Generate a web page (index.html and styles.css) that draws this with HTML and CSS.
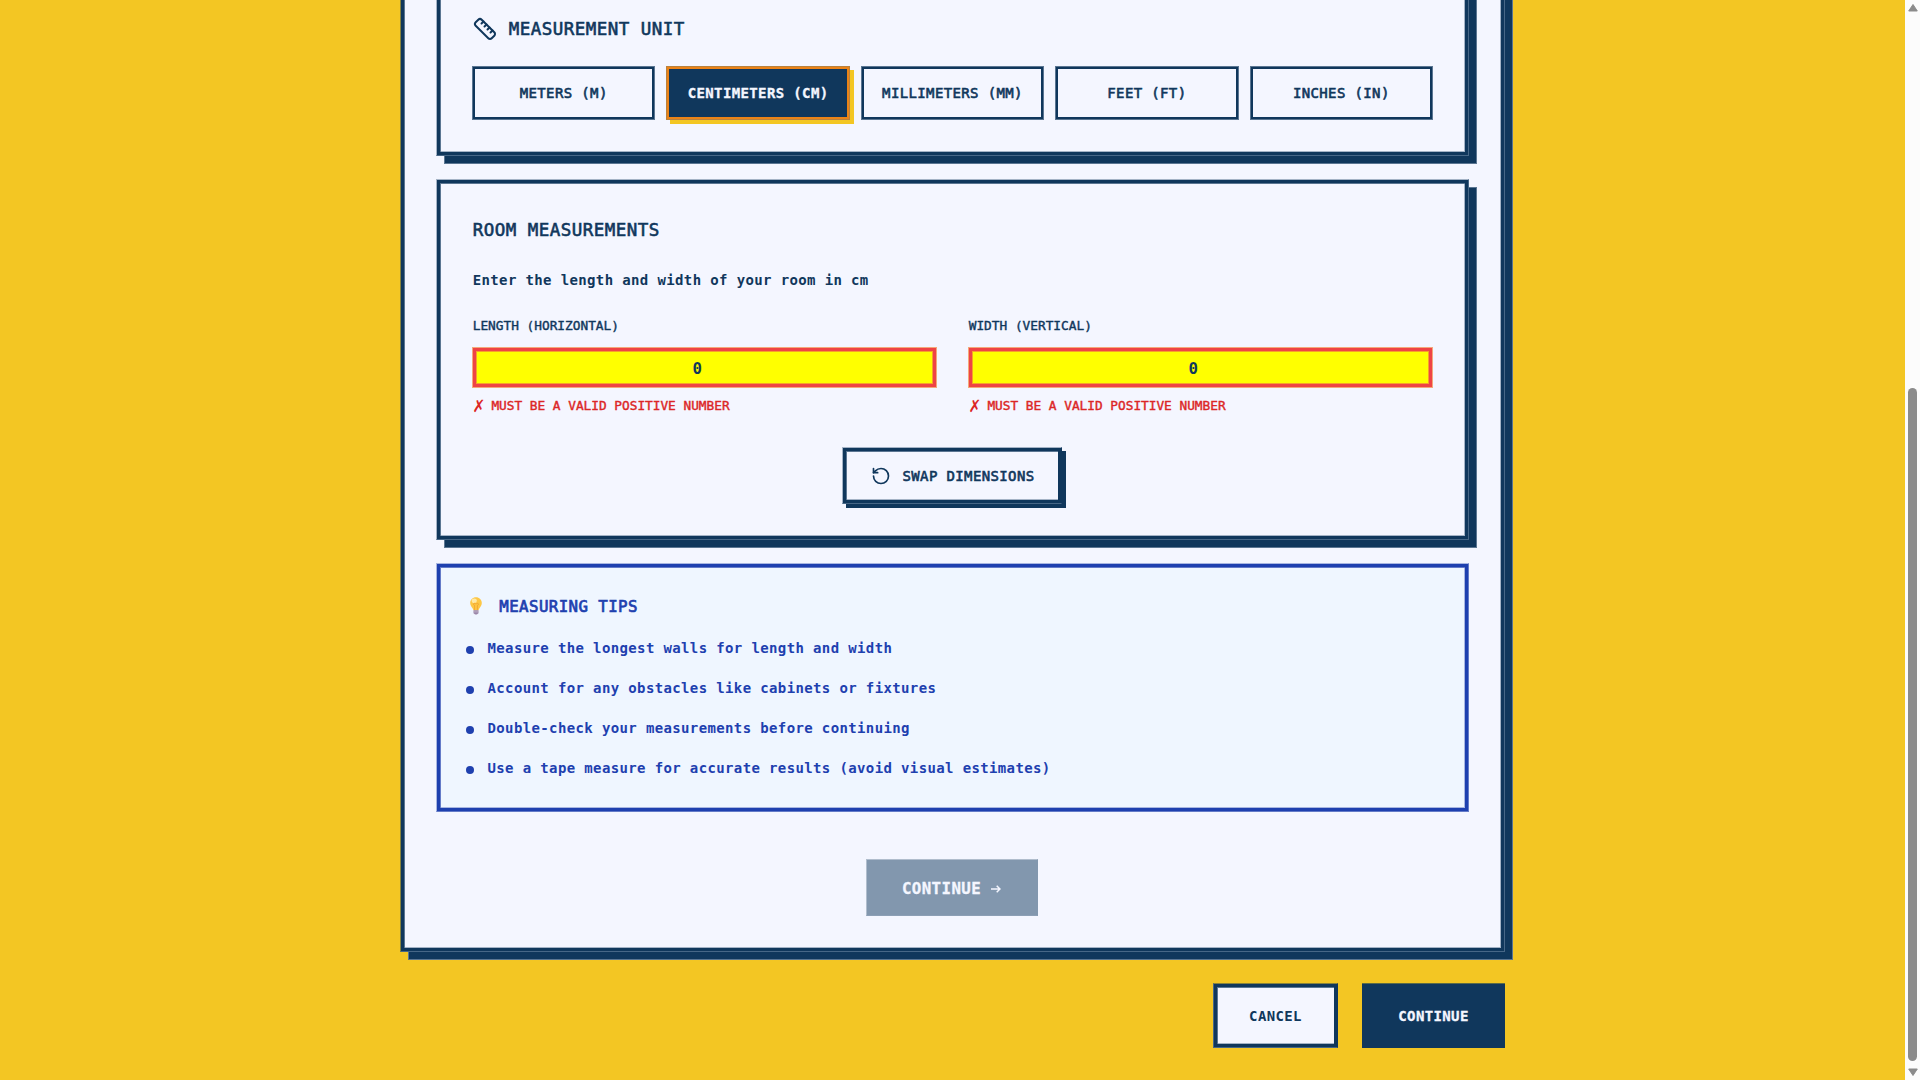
FILE: index.html
```html
<!DOCTYPE html>
<html lang="en">
<head>
<meta charset="utf-8">
<title>Room measurements</title>
<link rel="stylesheet" href="styles.css">
</head>
<body>
<div class="page">
  <main class="panel">
    <section class="card card-unit">
      <h2 class="heading heading-unit">
        <svg class="icon-ruler" viewBox="0 0 24 24" fill="none" stroke="currentColor" stroke-width="2" stroke-linecap="round" stroke-linejoin="round"><path d="M21.3 15.3a2.4 2.4 0 0 1 0 3.4l-2.6 2.6a2.4 2.4 0 0 1-3.4 0L2.7 8.7a2.41 2.41 0 0 1 0-3.4l2.6-2.6a2.41 2.41 0 0 1 3.4 0Z"/><path d="m14.5 12.5 2-2M11.5 9.5l2-2M8.5 6.5l2-2M17.5 15.5l2-2"/></svg>
        <span>MEASUREMENT UNIT</span>
      </h2>
      <div class="units">
        <button class="unit">METERS (M)</button>
        <button class="unit unit-active">CENTIMETERS (CM)</button>
        <button class="unit">MILLIMETERS (MM)</button>
        <button class="unit">FEET (FT)</button>
        <button class="unit">INCHES (IN)</button>
      </div>
    </section>

    <section class="card card-room">
      <h2 class="heading">ROOM MEASUREMENTS</h2>
      <p class="intro">Enter the length and width of your room in cm</p>
      <div class="fields">
        <div class="field">
          <div class="label">LENGTH (HORIZONTAL)</div>
          <div class="input">0</div>
          <div class="error"><span class="cross">✗</span>MUST BE A VALID POSITIVE NUMBER</div>
        </div>
        <div class="field">
          <div class="label">WIDTH (VERTICAL)</div>
          <div class="input">0</div>
          <div class="error"><span class="cross">✗</span>MUST BE A VALID POSITIVE NUMBER</div>
        </div>
      </div>
      <button class="swap">
        <svg class="icon-swap" viewBox="0 0 24 24" fill="none" stroke="currentColor" stroke-width="2" stroke-linecap="round" stroke-linejoin="round"><path d="M3 12a9 9 0 1 0 9-9 9.75 9.75 0 0 0-6.74 2.74L3 8"/><path d="M3 3v5h5"/></svg>
        <span>SWAP DIMENSIONS</span>
      </button>
    </section>

    <section class="card tips">
      <h3 class="tips-heading">
        <svg class="icon-bulb" viewBox="0 0 12 18"><path d="M6 .3C2.700 .3.200 2.800.200 6c0 2.200 1.200 3.600 2.200 4.900.6.8.9 1.500 1 2.400h5.200c.1-.9.400-1.600 1-2.400 1-1.300 2.200-2.700 2.200-4.900C11.800 2.800 9.300.3 6 .3z" fill="#fdc746"/><ellipse cx="4.300" cy="3.800" rx="2.600" ry="2.300" fill="#ffe9a6"/><path d="M4.600 13V8.300c-1.600-.4-1.400-2 0-2 1 0 1 .9 1.400.9s.4-.9 1.400-.9c1.400 0 1.600 1.600 0 2V13" fill="none" stroke="#f0a02c" stroke-width=".8"/><path d="M3.500 13.300h5v3l-1 .8h-3l-1-.8z" fill="#9a86a8"/><path d="M3.500 14.900h5" stroke="#cfc3d6" stroke-width=".7"/><path d="M4.800 17.100h2.400v.7H4.800z" fill="#b9a9c4"/></svg>
        <span>MEASURING TIPS</span>
      </h3>
      <ul class="tip-list">
        <li class="tip">Measure the longest walls for length and width</li>
        <li class="tip">Account for any obstacles like cabinets or fixtures</li>
        <li class="tip">Double-check your measurements before continuing</li>
        <li class="tip">Use a tape measure for accurate results (avoid visual estimates)</li>
      </ul>
    </section>

    <button class="next">CONTINUE <svg class="icon-arrow" viewBox="0 0 10 8" fill="none" stroke="currentColor" stroke-width="1.500"><path d="M0 4h8.800M5.700.8 9 4 5.700 7.200" /></svg></button>
  </main>

  <footer class="actions">
    <button class="action action-cancel">CANCEL</button>
    <button class="action action-continue">CONTINUE</button>
  </footer>
</div>
<div class="scrollbar">
  <svg class="scroll-arrow" viewBox="0 0 10 8"><path d="M5 .5 9.300 7H.7z" fill="#8b8b8b" stroke="#8b8b8b" stroke-linejoin="round"/></svg>
  <div class="scroll-thumb"></div>
  <svg class="scroll-arrow scroll-arrow-down" viewBox="0 0 10 8"><path d="M5 7.500.7 1h8.600z" fill="#8b8b8b" stroke="#8b8b8b" stroke-linejoin="round"/></svg>
</div>
</body>
</html>
```
FILE: styles.css
```css
:root {
  --navy: #10375c;
  --paper: #f4f6ff;
  --yellow: #f3c623;
  --orange: #eb8317;
  --line: var(--navy);
  --mid: #5b7692;
  --light: #a4b3c6;
}

* { box-sizing: border-box; margin: 0; padding: 0; }

body {
  display: flex;
  width: 1920px;
  height: 1080px;
  overflow: hidden;
  background: var(--yellow);
  color: var(--navy);
  font-family: "DejaVu Sans Mono", Consolas, monospace;
  font-size: 14px;
  font-weight: 700;
  letter-spacing: 0.37px;
}

button {
  font: inherit;
  letter-spacing: inherit;
  color: inherit;
  background: var(--paper);
  border: 0;
  white-space: nowrap;
}

.page {
  width: 1905px;
  padding-left: 400px;
}

/* Frames: a crisp 3px line with soft 1px edges and a hard drop shadow */
.panel, .card {
  background: var(--paper);
  border: 1px solid;
  border-color: var(--light) var(--mid) var(--mid) var(--light);
  box-shadow:
    inset 0 0 0 3px var(--line),
    inset 4px 4px 0 0 var(--mid),
    inset -4px -4px 0 0 var(--light),
    8px 8px 0 -1px var(--line),
    8px 8px 0 0 var(--mid);
}

.panel {
  display: flex;
  flex-direction: column;
  width: 1105px;
  height: 972px;
  margin-top: -20px;
  padding: 19px 35px 35px;
  border-color: #86823c #476787 #476787 #86823c;
}

.card {
  width: 1033px;
  padding: 36px 35px 35px;
  border-right-color: #476787;
  border-bottom-color: #476787;
}

.card-unit {
  height: 176px;
  margin-top: -20px;
  padding-top: 35px;
}

.card-room {
  display: flex;
  flex-direction: column;
  height: 361px;
  margin-top: 23px;
}

.heading {
  padding-left: 0.700px;
  font-size: 17.5px;
  font-weight: 400;
  line-height: 28px;
  letter-spacing: 0.465px;
  -webkit-text-stroke: 0.6px currentColor;
}

.heading-unit {
  display: flex;
  align-items: center;
  gap: 12px;
  height: 26px;
  line-height: 26px;
  margin-bottom: 24px;
}

.icon-ruler { width: 24px; height: 24px; margin-top: -1px; }

.units {
  display: grid;
  grid-template-columns: repeat(5, 1fr);
  gap: 11px;
  width: 961px;
}

.unit {
  height: 54px;
  border: 1px solid var(--mid);
  box-shadow: inset 0 0 0 2px var(--navy);
  font-weight: 400;
  -webkit-text-stroke: 0.6px currentColor;
}

.unit-active {
  background: var(--navy);
  color: var(--paper);
  border-color: #b9823f;
  box-shadow: inset 0 0 0 2px var(--orange), 4px 4px 0 0 var(--yellow);
  font-weight: 700;
  -webkit-text-stroke: 0.3px currentColor;
}

.intro {
  margin-top: 24px;
  padding-left: 0.700px;
  line-height: 24px;
}

.fields {
  display: flex;
  gap: 31px;
  margin-top: 24px;
}

.field { width: 465px; }

.label, .error {
  padding-left: 0.700px;
  font-size: 12.800px;
  font-weight: 400;
  line-height: 20px;
  letter-spacing: -0.006px;
  -webkit-text-stroke: 0.4px currentColor;
}

.input {
  height: 41px;
  margin-top: 11px;
  padding: 1px 14px 0 0;
  background: #ff0;
  border: 1px solid #f3a97a;
  box-shadow: inset 0 0 0 3px #ef4444, inset 0 0 0 4px #f5a02b;
  font-size: 15.750px;
  line-height: 39px;
  text-align: center;
}

.error {
  display: flex;
  margin-top: 8px;
  color: #dc2626;
  letter-spacing: -0.020px;
}

.cross {
  width: 18.700px;
  font-size: 14px;
  transform: translateY(-1px) scale(1.35, 1.5);
  transform-origin: 0 55%;
  -webkit-text-stroke: 0;
}

.swap {
  display: flex;
  align-items: center;
  align-self: center;
  justify-content: center;
  gap: 12px;
  width: 220px;
  height: 57px;
  margin-top: 31px;
  margin-right: 1px;
  padding-left: 1px;
  border: 1px solid;
  border-color: var(--light) var(--navy) #476787 var(--light);
  box-shadow:
    inset 0 0 0 3px var(--navy),
    inset 4px 4px 0 0 var(--mid),
    inset -3px -4px 0 0 var(--light),
    4px 4px 0 0 var(--navy);
  font-weight: 400;
  -webkit-text-stroke: 0.6px currentColor;
}

.icon-swap { width: 20px; height: 20px; }

.tips {
  --line: #1e40af;
  --mid: #647bc8;
  --light: #a8b6e1;
  height: 249px;
  margin-top: 23px;
  padding: 31px 29px;
  background: #eff6ff;
  border-color: var(--light) var(--mid) var(--mid) var(--light);
  box-shadow:
    inset 0 0 0 3px var(--line),
    inset 4px 4px 0 0 var(--mid),
    inset -4px -4px 0 0 var(--light);
  color: #1e40af;
}

.tips-heading {
  display: flex;
  align-items: center;
  gap: 17px;
  padding-left: 4.300px;
  font-size: 15.750px;
  font-weight: 400;
  line-height: 24px;
  letter-spacing: 0.418px;
  -webkit-text-stroke: 0.7px currentColor;
}

.icon-bulb { width: 12px; height: 18px; margin-top: -3px; }

.tip-list {
  display: flex;
  flex-direction: column;
  gap: 16px;
  margin-top: 17px;
  list-style: none;
}

.tip {
  display: flex;
  align-items: center;
  gap: 13.500px;
  line-height: 24px;
}

.tip::before {
  content: "";
  width: 8px;
  height: 8px;
  margin-top: 4px;
  border-radius: 50%;
  background: currentColor;
}

.next {
  display: flex;
  align-items: center;
  align-self: center;
  justify-content: center;
  gap: 10px;
  width: 172px;
  height: 57px;
  margin-top: 47px;
  margin-right: 2px;
  padding-top: 1px;
  border: 1px solid;
  border-color: #b0bdcd #8297ae #8c9fb5 #b0bdcd;
  background: #8297ae;
  color: var(--paper);
  font-size: 15.750px;
  letter-spacing: 0.418px;
  -webkit-text-stroke: 0.3px currentColor;
}

.icon-arrow { width: 10px; height: 8px; margin-top: 1px; }

.actions {
  display: flex;
  justify-content: flex-end;
  gap: 24px;
  width: 1105px;
  margin-top: 31px;
}

.action { height: 65px; }

.action-cancel {
  width: 125px;
  border: 1px solid;
  border-color: #86823c var(--navy) #476787 #476787;
  box-shadow:
    inset 0 0 0 3px var(--navy),
    inset 4px 4px 0 0 var(--mid),
    inset -3px -4px 0 0 var(--light);
}

.action-continue {
  width: 143px;
  border-top: 1px solid #5c6b48;
  background: var(--navy);
  color: var(--paper);
  -webkit-text-stroke: 0.3px currentColor;
}

.scrollbar {
  display: flex;
  flex-direction: column;
  align-items: center;
  width: 15px;
  height: 1080px;
  padding: 4px 0;
  background: #fcfcfc;
}

.scroll-arrow { width: 10px; height: 8px; }

.scroll-thumb {
  width: 9px;
  height: 674px;
  margin-top: 376px;
  border-radius: 5px;
  background: #8b8b8b;
}

.scroll-arrow-down { margin-top: 7px; }
```
